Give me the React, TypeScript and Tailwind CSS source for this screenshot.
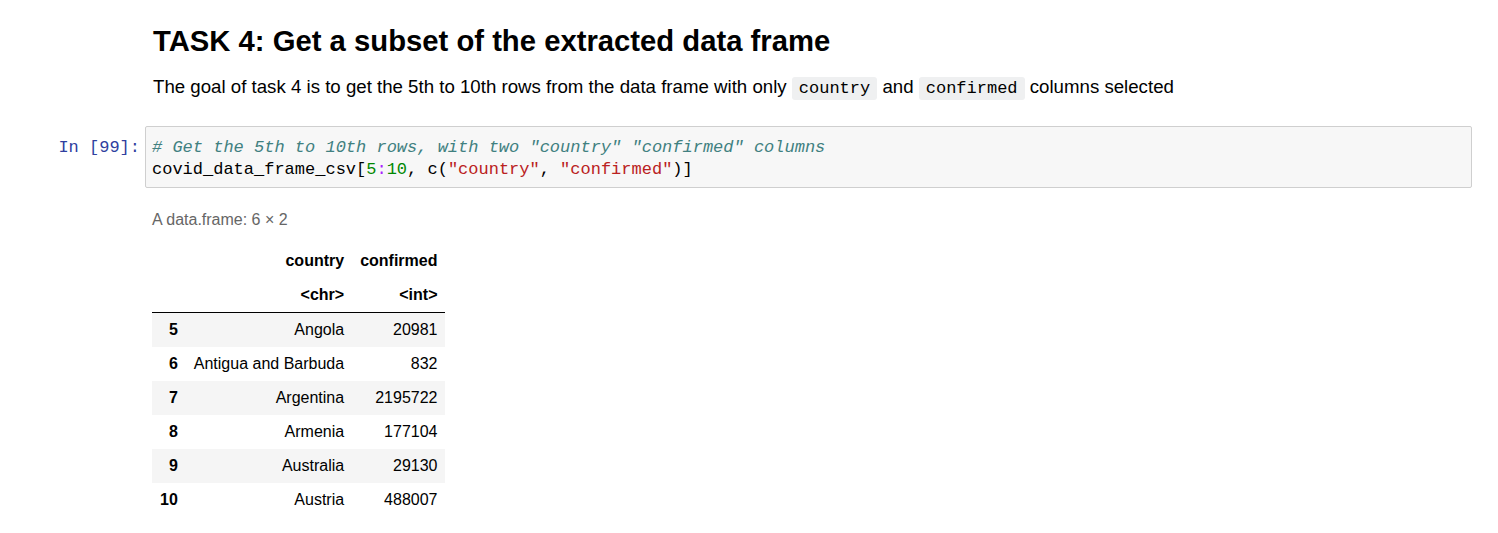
import React from "react";

type Row = { idx: string; country: string; confirmed: string };

const rows: Row[] = [
  { idx: "5", country: "Angola", confirmed: "20981" },
  { idx: "6", country: "Antigua and Barbuda", confirmed: "832" },
  { idx: "7", country: "Argentina", confirmed: "2195722" },
  { idx: "8", country: "Armenia", confirmed: "177104" },
  { idx: "9", country: "Australia", confirmed: "29130" },
  { idx: "10", country: "Austria", confirmed: "488007" },
];

const mono = "font-['Liberation_Mono','DejaVu_Sans_Mono',monospace]";

function InlineCode({ children }: { children: React.ReactNode }) {
  return (
    <code className={`${mono} rounded-[3px] bg-[#eff0f1] px-[7px] py-[2px] text-[17px] text-black`}>
      {children}
    </code>
  );
}

function MarkdownCell() {
  return (
    <div className="flex">
      <div className="w-[145px] shrink-0" />
      <div className="pl-[8px] text-black">
        <h1 className="pt-[24px] text-[29.25px] font-bold leading-[34px]">
          TASK 4: Get a subset of the extracted data frame
        </h1>
        <p className="mt-[16px] text-[18.67px] leading-[26px]">
          The goal of task 4 is to get the 5th to 10th rows from the data frame with only{" "}
          <InlineCode>country</InlineCode> and <InlineCode>confirmed</InlineCode> columns selected
        </p>
      </div>
    </div>
  );
}

function CodeCell() {
  return (
    <div className={`mt-[24px] flex ${mono} text-[17px] leading-[22px]`}>
      <div className="w-[145px] shrink-0 pr-[5px] pt-[11px] text-right text-[#303F9F]">In [99]:</div>
      <div className="mr-[26px] flex-1 rounded-[2px] border border-[#cfcfcf] bg-[#f7f7f7] pb-[6px] pl-[6px] pt-[10px]">
        <div className="italic text-[#408080]"># Get the 5th to 10th rows, with two "country" "confirmed" columns</div>
        <div className="whitespace-pre text-black">
          covid_data_frame_csv[<span className="text-[#008800]">5</span>
          <span className="text-[#AA22FF]">:</span>
          <span className="text-[#008800]">10</span>, c(
          <span className="text-[#BA2121]">"country"</span>,{" "}
          <span className="text-[#BA2121]">"confirmed"</span>)]
        </div>
      </div>
    </div>
  );
}

function OutputCell() {
  return (
    <div className="flex">
      <div className="w-[152px] shrink-0" />
      <div>
        <div className="mt-[22px] text-[16px] leading-[20px] text-[#666666]">A data.frame: 6 × 2</div>
        <table className="mt-[14px] border-collapse text-[16px] leading-[18px] text-black">
          <thead>
            <tr>
              <th className="px-[8px] py-[8px]" />
              <th className="px-[8px] py-[8px] text-right font-bold">country</th>
              <th className="px-[8px] py-[8px] text-right font-bold">confirmed</th>
            </tr>
            <tr className="border-b border-black">
              <th className="px-[8px] py-[8px]" />
              <th className="px-[8px] py-[8px] text-right font-bold">&lt;chr&gt;</th>
              <th className="px-[8px] py-[8px] text-right font-bold">&lt;int&gt;</th>
            </tr>
          </thead>
          <tbody>
            {rows.map((r, i) => (
              <tr key={r.idx} className={i % 2 === 0 ? "bg-[#f5f5f5]" : "bg-white"}>
                <th className="px-[8px] py-[8px] text-right font-bold">{r.idx}</th>
                <td className="px-[8px] py-[8px] text-right">{r.country}</td>
                <td className="px-[8px] py-[8px] text-right">{r.confirmed}</td>
              </tr>
            ))}
          </tbody>
        </table>
      </div>
    </div>
  );
}

export default function App() {
  return (
    <div className="h-[533px] w-full overflow-hidden bg-white font-['Liberation_Sans',Arial,sans-serif]">
      <MarkdownCell />
      <CodeCell />
      <OutputCell />
    </div>
  );
}
